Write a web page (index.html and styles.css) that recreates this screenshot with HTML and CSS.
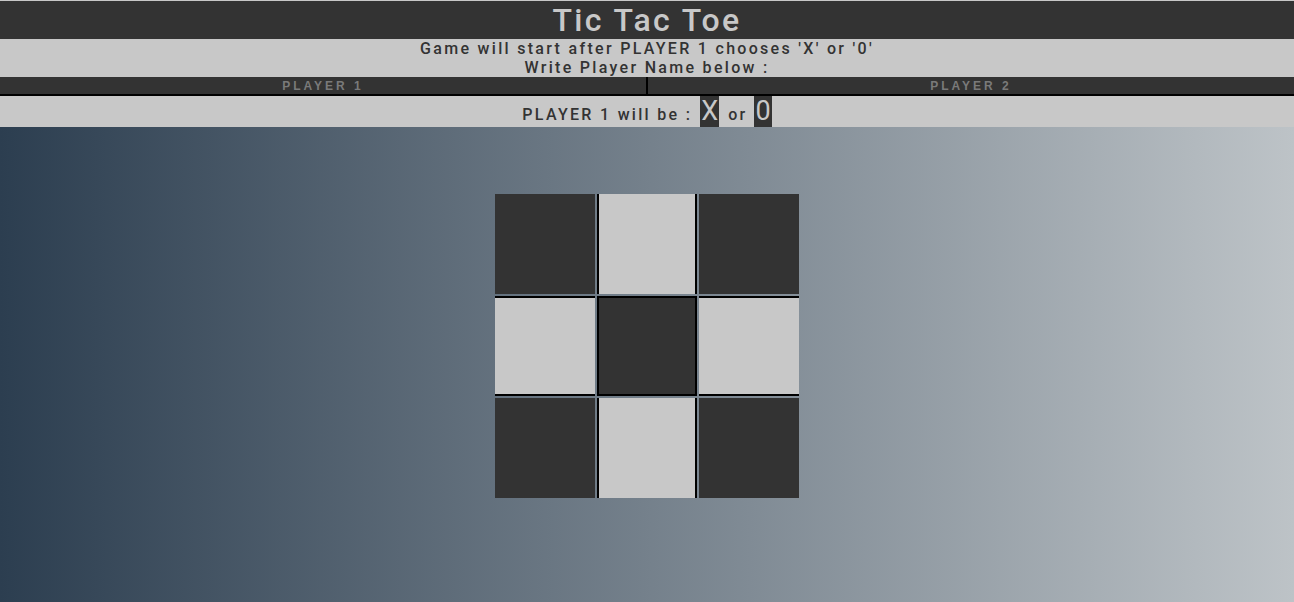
FILE: index.html
```html
<!DOCTYPE html>
<html>
<head>
<meta charset="utf-8">
<title>Tic Tac Toe</title>
<link rel="stylesheet" href="styles.css">
</head>
<body>
<header class="top">
  <h1 class="title">Tic Tac Toe</h1>
  <div class="info">
    <p class="info-line">Game will start after PLAYER 1 chooses 'X' or '0'</p>
    <p class="info-line">Write Player Name below :</p>
  </div>
  <div class="players">
    <input class="player-input left" type="text" placeholder="PLAYER 1">
    <input class="player-input" type="text" placeholder="PLAYER 2">
  </div>
  <div class="choice">
    <span class="choice-text">PLAYER 1 will be :</span>
    <button class="pick">X</button>
    <span class="choice-text or">or</span>
    <button class="pick">0</button>
  </div>
</header>
<main class="stage">
  <div class="board">
    <div class="cell dark"></div>
    <div class="cell light mid-col"></div>
    <div class="cell dark"></div>
    <div class="cell light mid-row"></div>
    <div class="cell dark mid-row mid-col"></div>
    <div class="cell light mid-row"></div>
    <div class="cell dark"></div>
    <div class="cell light mid-col"></div>
    <div class="cell dark"></div>
  </div>
</main>
</body>
</html>
```
FILE: styles.css
```css
* { box-sizing: border-box; }
html, body { height: 100%; }
body {
  margin: 0;
  font-family: Roboto, "Liberation Sans", sans-serif;
  background: linear-gradient(to right, #2c3e50, #bdc3c7);
  display: flex;
  flex-direction: column;
}
.top {
  background: #c8c8c8;
  padding-top: 1px;
  text-align: center;
}
.title {
  margin: 0;
  background: #333333;
  color: #c8c8c8;
  font-size: 32px;
  font-weight: 500;
  letter-spacing: 2.4px;
  height: 38px;
  line-height: 38px;
}
.info {
  height: 38px;
}
.info-line {
  margin: 0;
  height: 19px;
  line-height: 19px;
  font-size: 16px;
  font-weight: 500;
  letter-spacing: 2.3px;
  color: #333333;
}
.players {
  display: flex;
  border-bottom: 2px solid #000;
}
.player-input {
  flex: 1;
  min-width: 0;
  height: 17px;
  margin: 0;
  padding: 0;
  border: none;
  outline: none;
  background: #333333;
  text-align: center;
  font-family: "Liberation Sans", Arial, sans-serif;
  font-size: 12px;
  font-weight: bold;
  letter-spacing: 3px;
  color: #7a7a7a;
}
.player-input::placeholder { color: #7a7a7a; opacity: 1; }
.player-input.left { border-right: 2px solid #000; }
.choice {
  height: 31px;
  line-height: 31px;
  display: flex;
  justify-content: center;
  align-items: baseline;
}
.choice-text {
  font-size: 16px;
  font-weight: 500;
  letter-spacing: 2.3px;
  color: #333333;
  margin-right: 8px;
}
.choice-text.or { margin-left: 9px; margin-right: 7px; }
.pick {
  font-family: Roboto, "Liberation Sans", sans-serif;
  background: #333333;
  color: #c8c8c8;
  border: none;
  margin: 0;
  padding: 0 1px;
  font-size: 27px;
  line-height: 31px;
  height: 31px;
  font-weight: 400;
}
.stage {
  flex: 1;
  display: flex;
  justify-content: center;
  padding-top: 67px;
}
.board {
  display: grid;
  grid-template-columns: repeat(3, 100px);
  grid-template-rows: repeat(3, 100px);
  gap: 2px;
  align-self: flex-start;
}
.cell.dark { background: #333333; }
.cell.light { background: #c8c8c8; }
.cell.mid-col { border-left: 2px solid #000; border-right: 2px solid #000; }
.cell.mid-row { border-top: 2px solid #000; border-bottom: 2px solid #000; }
```
